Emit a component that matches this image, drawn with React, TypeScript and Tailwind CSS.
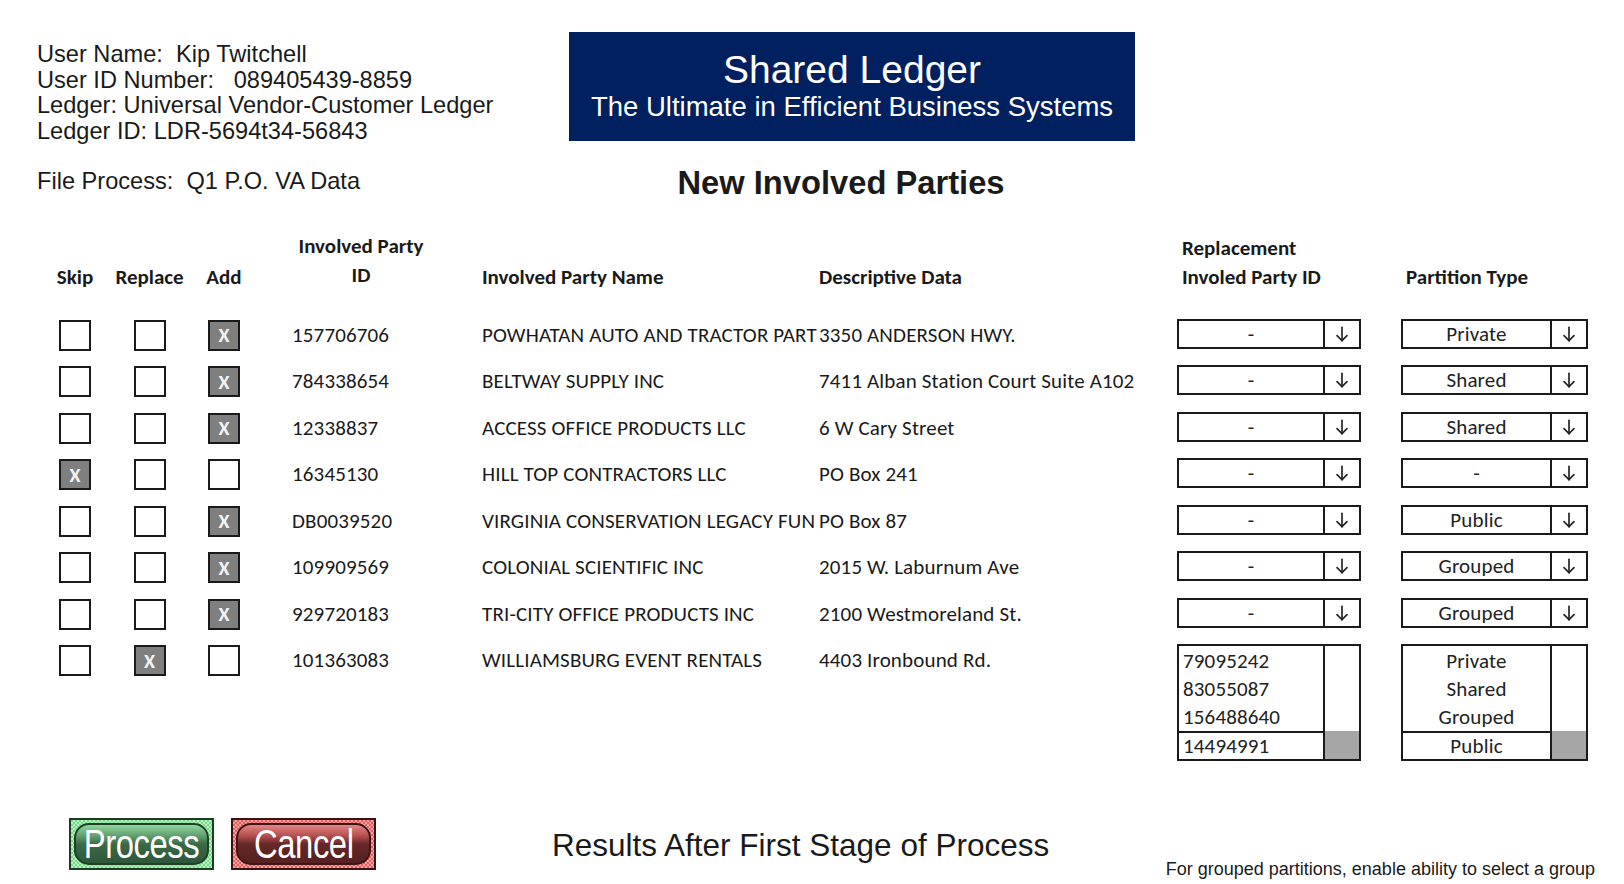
import React from 'react';

const arial = { fontFamily: '"Liberation Sans", Arial, sans-serif' };
const calibri = { fontFamily: 'Carlito, Lato, "Open Sans", sans-serif' };

type Row = {
  check: 'skip' | 'replace' | 'add';
  id: string;
  name: string;
  desc: string;
  partition?: string;
};

const rows: Row[] = [
  { check: 'add', id: '157706706', name: 'POWHATAN AUTO AND TRACTOR PART', desc: '3350 ANDERSON HWY.', partition: 'Private' },
  { check: 'add', id: '784338654', name: 'BELTWAY SUPPLY INC', desc: '7411 Alban Station Court Suite A102', partition: 'Shared' },
  { check: 'add', id: '12338837', name: 'ACCESS OFFICE PRODUCTS LLC', desc: '6 W Cary Street', partition: 'Shared' },
  { check: 'skip', id: '16345130', name: 'HILL TOP CONTRACTORS LLC', desc: 'PO Box 241', partition: '-' },
  { check: 'add', id: 'DB0039520', name: 'VIRGINIA CONSERVATION LEGACY FUN', desc: 'PO Box 87', partition: 'Public' },
  { check: 'add', id: '109909569', name: 'COLONIAL SCIENTIFIC INC', desc: '2015 W. Laburnum Ave', partition: 'Grouped' },
  { check: 'add', id: '929720183', name: 'TRI-CITY OFFICE PRODUCTS INC', desc: '2100 Westmoreland St.', partition: 'Grouped' },
  { check: 'replace', id: '101363083', name: 'WILLIAMSBURG EVENT RENTALS', desc: '4403 Ironbound Rd.' },
];

function Box({ on }: { on: boolean }) {
  return (
    <div
      className={`w-[32px] h-[31px] border-2 border-[#1a1a1a] flex items-center justify-center text-[20px] font-bold text-[#f2f2f2] ${
        on ? 'bg-[#7f7f7f]' : 'bg-white'
      }`}
    >
      {on ? 'X' : ''}
    </div>
  );
}

function Arrow() {
  return (
    <svg width="20" height="20" viewBox="0 0 24 24" fill="none" stroke="#222" strokeWidth="2" strokeLinecap="round" strokeLinejoin="round">
      <path d="M12 4v16" />
      <path d="M6 14l6 6 6-6" />
    </svg>
  );
}

function Dropdown({ value, width }: { value: string; width: string }) {
  return (
    <div className={`${width} h-[30px] border-2 border-[#1a1a1a] flex bg-white`}>
      <div className="flex-1 flex items-center justify-center pt-[2px] text-[21px] text-[#222]">{value}</div>
      <div className="w-[36px] border-l-2 border-[#1a1a1a] flex items-center justify-center">
        <Arrow />
      </div>
    </div>
  );
}

function ListBox({ items, width, center }: { items: string[]; width: string; center?: boolean }) {
  return (
    <div className={`${width} h-[117px] border-2 border-[#1a1a1a] flex bg-white`}>
      <div className="flex-1 flex flex-col text-[21px] text-[#222]">
        <div className={`flex-1 flex flex-col justify-center ${center ? 'items-center' : 'pl-[4px]'}`}>
          {items.slice(0, 3).map((t) => (
            <div key={t} className="h-[28px] leading-[28px]">{t}</div>
          ))}
        </div>
        <div className={`h-[28px] leading-[26px] border-t-2 border-[#1a1a1a] ${center ? 'text-center' : 'pl-[4px]'}`}>
          {items[3]}
        </div>
      </div>
      <div className="w-[36px] border-l-2 border-[#1a1a1a] flex flex-col">
        <div className="flex-1" />
        <div className="h-[28px] bg-[#a6a6a6]" />
      </div>
    </div>
  );
}

function GlossyButton({ label, green }: { label: string; green?: boolean }) {
  return (
    <div
      className={`w-[145px] h-[52px] border-2 p-[3px] ${
        green
          ? 'border-[#1d3a22] bg-[repeating-conic-gradient(#b4f2bf_0%_25%,#7ad88c_0%_50%)] bg-[length:4px_4px]'
          : 'border-[#3a1414] bg-[repeating-conic-gradient(#f4a0a0_0%_25%,#e06060_0%_50%)] bg-[length:4px_4px]'
      }`}
    >
      <div
        className={`h-full rounded-[15px] border-2 flex items-center justify-center overflow-hidden ${
          green
            ? 'border-[#1f4027] bg-[linear-gradient(to_bottom,#8fd6a0_0%,#5e9c6c_30%,#3a6a46_50%,#2e573a_100%)]'
            : 'border-[#3d1515] bg-[linear-gradient(to_bottom,#e58585_0%,#b04c4c_30%,#652828_50%,#552121_100%)]'
        }`}
      >
        <span className="text-white text-[40px] leading-none inline-block scale-x-[0.82] tracking-[-0.5px]" style={arial}>
          {label}
        </span>
      </div>
    </div>
  );
}

const cols = 'grid grid-cols-[74px_75px_74px_221px_337px_358px_224px_220px]';

export default function App() {
  return (
    <div className="w-[1624px] h-[884px] bg-white text-[#1a1a1a] relative overflow-hidden" style={arial}>
      {/* header */}
      <div className="flex pt-[32px]">
        <div className="w-[569px] pl-[37px] pt-[10px] text-[23.6px] leading-[25.6px]">
          <div className="whitespace-pre">User Name:  Kip Twitchell</div>
          <div className="whitespace-pre">User ID Number:   089405439-8859</div>
          <div>Ledger: Universal Vendor-Customer Ledger</div>
          <div>Ledger ID: LDR-5694t34-56843</div>
          <div className="whitespace-pre mt-[25px]">File Process:  Q1 P.O. VA Data</div>
        </div>
        <div className="flex flex-col items-center">
          <div className="w-[566px] h-[109px] bg-[#002060] text-white flex flex-col items-center justify-center">
            <div className="text-[39px] leading-[42px] mt-[-2px]">Shared Ledger</div>
            <div className="text-[27.5px] leading-[32px]">The Ultimate in Efficient Business Systems</div>
          </div>
          <div className="mt-[26px] ml-[-22px] text-[32.7px] font-bold leading-none">New Involved Parties</div>
        </div>
      </div>

      {/* table */}
      <div className="mt-[22px] pl-[38px] text-[#1a1a1a]" style={calibri}>
        <div className={`${cols} items-end h-[70px] text-[21px] font-bold leading-[29px]`}>
          <div className="text-center">Skip</div>
          <div className="text-center">Replace</div>
          <div className="text-center">Add</div>
          <div className="pl-[31px]">
            <div className="w-[138px] text-center mb-[2px]">
              Involved Party
              <br />
              ID
            </div>
          </div>
          <div>Involved Party Name</div>
          <div>Descriptive Data</div>
          <div className="pl-[5px]">
            Replacement
            <br />
            Involed Party ID
          </div>
          <div className="pl-[5px]">Partition Type</div>
        </div>

        <div className="mt-[27px]">
          {rows.map((r) => (
            <div key={r.id} className={`${cols} items-start h-[46.5px] text-[21px] tracking-[0.15px]`}>
              <div className="flex justify-center pt-[1px]"><Box on={r.check === 'skip'} /></div>
              <div className="flex justify-center pt-[1px]"><Box on={r.check === 'replace'} /></div>
              <div className="flex justify-center pt-[1px]"><Box on={r.check === 'add'} /></div>
              <div className="pl-[31px] leading-[32px]">{r.id}</div>
              <div className="leading-[32px] whitespace-nowrap overflow-hidden">{r.name}</div>
              <div className="leading-[32px] whitespace-nowrap">{r.desc}</div>
              <div>
                {r.partition !== undefined ? (
                  <Dropdown value="-" width="w-[184px]" />
                ) : (
                  <ListBox width="w-[184px]" items={['79095242', '83055087', '156488640', '14494991']} />
                )}
              </div>
              <div>
                {r.partition !== undefined ? (
                  <Dropdown value={r.partition} width="w-[187px]" />
                ) : (
                  <ListBox width="w-[187px]" center items={['Private', 'Shared', 'Grouped', 'Public']} />
                )}
              </div>
            </div>
          ))}
        </div>
      </div>

      {/* footer */}
      <div className="absolute left-0 right-0 top-[818px] flex items-start">
        <div className="pl-[69px] flex gap-[17px]">
          <GlossyButton label="Process" green />
          <GlossyButton label="Cancel" />
        </div>
        <div className="ml-[176px] mt-[12px] text-[31.5px] leading-none">Results After First Stage of Process</div>
        <div className="ml-auto mr-[29px] mt-[42px] text-[18px] leading-none">For grouped partitions, enable ability to select a group</div>
      </div>
    </div>
  );
}
